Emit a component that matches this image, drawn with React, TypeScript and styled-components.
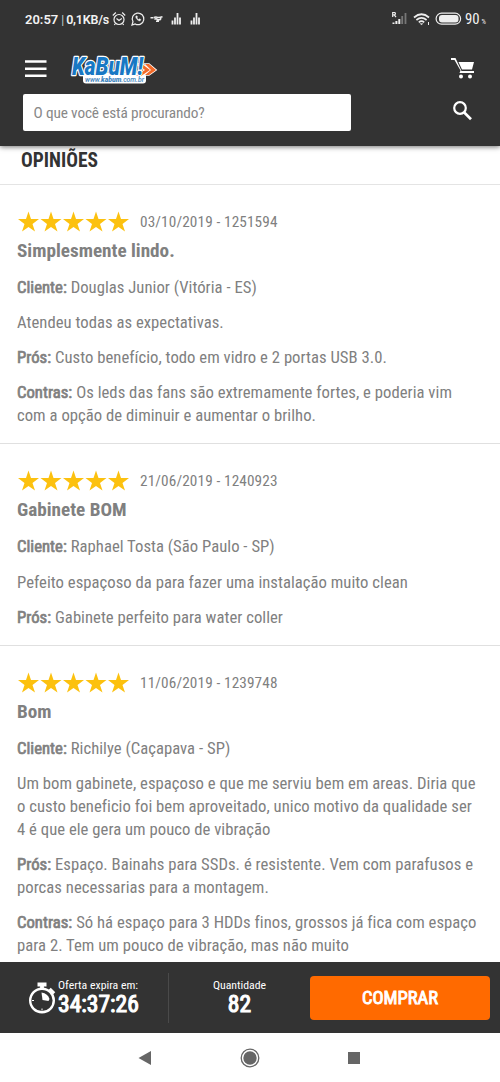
import React from "react";
import styled, { createGlobalStyle } from "styled-components";

const Global = createGlobalStyle`
  * { box-sizing: border-box; }
  body { margin: 0; background: #fff; font-family: "Roboto Condensed", Roboto, "Liberation Sans", sans-serif; font-stretch: 75%; }
  h1, h2, p { margin: 0; }
`;

const Screen = styled.div`
  width: 500px;
  height: 1082px;
  overflow: hidden;
  display: flex;
  flex-direction: column;
  background: #fff;
`;

const Header = styled.header`
  flex: none;
  height: 146px;
  background: #333;
  box-shadow: 0 1px 5px rgba(0, 0, 0, 0.55);
  position: relative;
  z-index: 1;
`;

const StatusBar = styled.div`
  height: 38px;
  padding: 0 15px 0 25px;
  display: flex;
  align-items: center;
  justify-content: space-between;
  color: #f2f2f2;
  font-family: Roboto, sans-serif;
  font-stretch: 100%;
  font-size: 13px;
  font-weight: 600;
`;

const StatusGroup = styled.div`
  display: flex;
  align-items: center;
`;

const Separator = styled.span`
  font-weight: 300;
  margin: 0 2px 0 3px;
`;

const Speed = styled.span`
  font-size: 12.5px;
  letter-spacing: -0.2px;
  margin-right: 2px;
`;

const Row = styled.div<{ $height: number }>`
  height: ${(p) => p.$height}px;
  padding: 0 25px 0 24px;
  display: flex;
  align-items: center;
  justify-content: space-between;
`;

const Brand = styled.div`
  display: flex;
  align-items: center;
  gap: 21px;
  padding-top: 4px;
`;

const SearchField = styled.div`
  width: 328px;
  height: 37px;
  margin-left: -1px;
  padding-left: 10.5px;
  border-radius: 2px;
  background: #fff;
  color: #888;
  display: flex;
  align-items: center;
  font-size: 15.3px;
  letter-spacing: -0.14px;
  white-space: nowrap;
`;

const Content = styled.main`
  flex: 1;
  min-height: 0;
  overflow: hidden;
`;

const Heading = styled.h1`
  height: 38.5px;
  padding: 2px 0 0 21px;
  border-bottom: 1px solid #e4e4e4;
  color: #333;
  font-size: 19.45px;
  line-height: 26px;
  font-weight: 700;
`;

const ReviewItem = styled.article`
  padding: 25px 0 15.5px 17px;
  border-bottom: 1px solid #e0e0e0;
  color: #808080;
`;

const Meta = styled.div`
  height: 24px;
  display: flex;
  align-items: center;
  gap: 11px;
  font-size: 15.28px;
  letter-spacing: 0.12px;
`;

const Title = styled.h2`
  font-size: 19.2px;
  line-height: 33.4px;
  margin-bottom: 9.6px;
`;

const Paragraph = styled.p`
  font-size: 16.67px;
  line-height: 22.7px;
  letter-spacing: 0.03px;
  white-space: pre;
  & + & { margin-top: 12.6px; }
  b {
    font-weight: 400;
    -webkit-text-stroke: 0.7px currentColor;
  }
`;

const Footer = styled.footer`
  flex: none;
  height: 71px;
  background: #333;
  color: #fff;
  display: flex;
  align-items: center;
`;

const Offer = styled.div`
  width: 169px;
  height: 50px;
  padding-left: 28px;
  border-right: 1px solid #4a4a4a;
  display: flex;
  align-items: center;
  gap: 2px;
`;

const Stat = styled.div<{ $center?: boolean }>`
  width: ${(p) => (p.$center ? "141px" : "auto")};
  margin-top: -2px;
  text-align: ${(p) => (p.$center ? "center" : "left")};
  white-space: nowrap;
`;

const StatLabel = styled.div`
  font-size: 11.8px;
  line-height: 16px;
`;

const StatValue = styled.div`
  font-size: 23.6px;
  line-height: 23px;
  -webkit-text-stroke: 1.1px currentColor;
`;

const BuyButton = styled.button`
  width: 180px;
  height: 44px;
  padding: 1px 0 0;
  border: 0;
  border-radius: 4px;
  background: #ff6a00;
  color: #fff;
  font: inherit;
  font-stretch: 75%;
  font-size: 18.5px;
  -webkit-text-stroke: 0.9px currentColor;
`;

const NavBar = styled.nav`
  flex: none;
  height: 49px;
  padding: 0 139px 0 137px;
  display: flex;
  align-items: center;
  justify-content: space-between;
`;

const StatusIcons = () => (
  <svg width="90" height="20" viewBox="0 0 90 20" fill="none" stroke="#eee" strokeWidth="1.2">
    <circle cx="8" cy="10.5" r="5" />
    <path d="M5.500 9.500l2.500 2 2.800-2M1.800 6.500l3-3M14.200 6.500l-3-3M4.500 14.500l-1.200 1.500M11.500 14.500l1.200 1.500" />
    <path d="M21 16l1-3.300a5.800 5.800 0 1 1 2.200 2.200z" />
    <path d="M24.800 7.300c-.8 1.500 2.600 5.400 4.400 4.500l.8-1.200-1.600-.9-.9.8-1.500-1.600.6-.9-.7-1.300z" fill="#eee" strokeWidth=".4" />
    <path d="M39.500 8.800h3M43 8.500q2-1.200 3.500 0h2l3-.8M43.500 10.500q1.500-1.500 3 .3h2.500l1.200-1.500M45 12.300h3" strokeWidth="1.500" />
    <path d="M61.500 15.500v-4M64 15.500v-7M66.500 15.500v-11.500M69 15.500v-7M80.500 15.500v-4M83 15.500v-7M85.500 15.500v-11.500M88 15.500v-7" strokeWidth="1.800" />
  </svg>
);

const SystemIcons = () => (
  <svg width="72" height="20" viewBox="0 0 72 20" fill="none" stroke="#eee">
    <path d="M1.700 8V3.500h2q1.500 1.200 0 2.300h-2m1.500 0L5 8" strokeWidth="1.200" />
    <path d="M2.500 15v-1.500M5.400 15v-3M8.300 15V10" strokeWidth="2" />
    <path d="M11.200 15V7M14.500 15V4" stroke="#777" strokeWidth="1.800" />
    <path d="M23 8.500q7.500-6.500 15 0M25.400 11q5.100-4.300 10.200 0M27.800 13.300q2.700-2.200 5.400 0" strokeWidth="1.700" />
    <path d="M29 14.400h3l-1.500 1.700z" fill="#eee" strokeWidth=".3" />
    <path d="M37.500 13v3" strokeWidth="1" />
    <rect x="45.100" y="4.200" width="24.500" height="11" rx="5.500" strokeWidth="1.200" />
    <rect x="48" y="6" width="19.500" height="7.400" rx="3" fill="#eee" stroke="none" />
  </svg>
);

const Percent = styled.span`
  width: 22px;
  padding-left: 2px;
  font-family: "Roboto Condensed", Roboto, sans-serif;
  font-size: 14.8px;
  font-weight: 400;
  font-stretch: 75%;
  white-space: nowrap;
  small { font-size: 7px; margin-left: 2px; }
`;

const Logo = () => (
  <svg width="88" height="34" viewBox="0 0 88 34" overflow="visible">
    <rect x="14" y="22" width="63" height="10.500" rx="3" fill="#fff" />
    <g fontFamily="Roboto, sans-serif" fontStyle="italic" fontWeight="900" fontStretch="100%">
      <path d="M68 13l8 6-9 6h5l9-6-8-6zM76 13l6 6-6 5h4l7-5-7-6z" fill="#f26a28" stroke="#fff" strokeWidth="1.600" paintOrder="stroke" />
      <text x="3" y="23.500" fontSize="26" textLength="71" lengthAdjust="spacingAndGlyphs" fill="#1878c4" stroke="#fff" strokeWidth="2.600" strokeLinejoin="round" paintOrder="stroke">KaBuM!</text>
      <text x="16" y="30.500" fontSize="8" fontWeight="500" textLength="59" lengthAdjust="spacingAndGlyphs" fill="#3d84bd">www.<tspan fontWeight="900">kabum</tspan>.com.br</text>
    </g>
  </svg>
);

const Stars = () => (
  <svg width="112" height="22" viewBox="0 0 112 22" fill="#fcc10f">
    {[0, 1, 2, 3, 4].map((i) => (
      <path key={i} transform={`translate(${i * 22.5} 0)`} d="M11.500 0.500l2.500 7.500h8l-6.500 4.900 2.500 7.700-6.500-4.700L5 20.600l2.500-7.700L1 8h8z" />
    ))}
  </svg>
);

type Review = { meta: string; title: string; body: [string, string][] };

const reviews: Review[] = [
  {
    meta: "03/10/2019 - 1251594",
    title: "Simplesmente lindo.",
    body: [
      ["Cliente:", "Douglas Junior (Vitória - ES)"],
      ["", "Atendeu todas as expectativas."],
      ["Prós:", "Custo benefício, todo em vidro e 2 portas USB 3.0."],
      ["Contras:", "Os leds das fans são extremamente fortes, e poderia vim\ncom a opção de diminuir e aumentar o brilho."],
    ],
  },
  {
    meta: "21/06/2019 - 1240923",
    title: "Gabinete BOM",
    body: [
      ["Cliente:", "Raphael Tosta (São Paulo - SP)"],
      ["", "Pefeito espaçoso da para fazer uma instalação muito clean"],
      ["Prós:", "Gabinete perfeito para water coller"],
    ],
  },
  {
    meta: "11/06/2019 - 1239748",
    title: "Bom",
    body: [
      ["Cliente:", "Richilye (Caçapava - SP)"],
      ["", "Um bom gabinete, espaçoso e que me serviu bem em areas. Diria que\no custo beneficio foi bem aproveitado, unico motivo da qualidade ser\n4 é que ele gera um pouco de vibração"],
      ["Prós:", "Espaço. Bainahs para SSDs. é resistente. Vem com parafusos e\nporcas necessarias para a montagem."],
      ["Contras:", "Só há espaço para 3 HDDs finos, grossos já fica com espaço\npara 2. Tem um pouco de vibração, mas não muito"],
    ],
  },
];

export default function App() {
  return (
    <Screen>
      <Global />
      <Header>
        <StatusBar>
          <StatusGroup>
            <span>20:57</span>
            <Separator>|</Separator>
            <Speed>0,1KB/s</Speed>
            <StatusIcons />
          </StatusGroup>
          <StatusGroup>
            <SystemIcons />
            <Percent>90<small>%</small></Percent>
          </StatusGroup>
        </StatusBar>
        <Row $height={56}>
          <Brand>
            <svg width="24" height="18" viewBox="0 0 24 18" stroke="#fff" strokeWidth="2.400">
              <path d="M1 2.500h21.500M1 9.700h21.500M1 16.800h21.500" />
            </svg>
            <Logo />
          </Brand>
          <svg width="24" height="26" viewBox="0 -5 24 26" fill="#fff">
            <path d="M0 0h4.500l6 13H23v2H8.500l1-2.500L3.500 2H0zM7.500 4H23l-2 7.500H11z" />
            <circle cx="10" cy="18.500" r="2" />
            <circle cx="19" cy="18.500" r="2" />
          </svg>
        </Row>
        <Row $height={37}>
          <SearchField>O que você está procurando?</SearchField>
          <svg width="24" height="24" viewBox="0 0.500 24 24" fill="none" stroke="#fff" strokeWidth="2.200">
            <circle cx="9" cy="7.500" r="5.800" />
            <path d="M13 11.700l7 7" strokeWidth="2.700" />
          </svg>
        </Row>
      </Header>
      <Content>
        <Heading>OPINIÕES</Heading>
        {reviews.map((r) => (
          <ReviewItem key={r.meta}>
            <Meta><Stars />{r.meta}</Meta>
            <Title>{r.title}</Title>
            {r.body.map(([label, text]) => (
              <Paragraph key={text}>{label && <b>{label}</b>}{label && " "}{text}</Paragraph>
            ))}
          </ReviewItem>
        ))}
      </Content>
      <Footer>
        <Offer>
          <svg width="28" height="34" viewBox="0 0.500 28 34" fill="none" stroke="#fff">
            <circle cx="14" cy="20" r="11.800" strokeWidth="2.400" />
            <path d="M9.500 4h9M14 4v4" strokeWidth="3.800" />
            <path d="M21.500 8.500l4.500 4.500" strokeWidth="3.600" />
            <path d="M14.500 19.500l-1-7.500q6.500 1 8 6.500l-1 2z" fill="#fff" stroke="none" />
            <path d="M4 20h2M14 28v2" strokeWidth="1" />
          </svg>
          <Stat>
            <StatLabel>Oferta expira em:</StatLabel>
            <StatValue>34:37:26</StatValue>
          </Stat>
        </Offer>
        <Stat $center>
          <StatLabel>Quantidade</StatLabel>
          <StatValue>82</StatValue>
        </Stat>
        <BuyButton>COMPRAR</BuyButton>
      </Footer>
      <NavBar>
        <svg width="15" height="16" viewBox="0 0 15 16" fill="#666"><path d="M1.500 8L14 1v14z" /></svg>
        <svg width="20" height="20" viewBox="0 0 20 20"><circle cx="10" cy="10" r="8.800" fill="none" stroke="#666" strokeWidth="1.300" /><circle cx="10" cy="10" r="6.700" fill="#666" /></svg>
        <svg width="14" height="14" viewBox="0 0 14 14" fill="#666"><path d="M1 1h12v12H1z" /></svg>
      </NavBar>
    </Screen>
  );
}
